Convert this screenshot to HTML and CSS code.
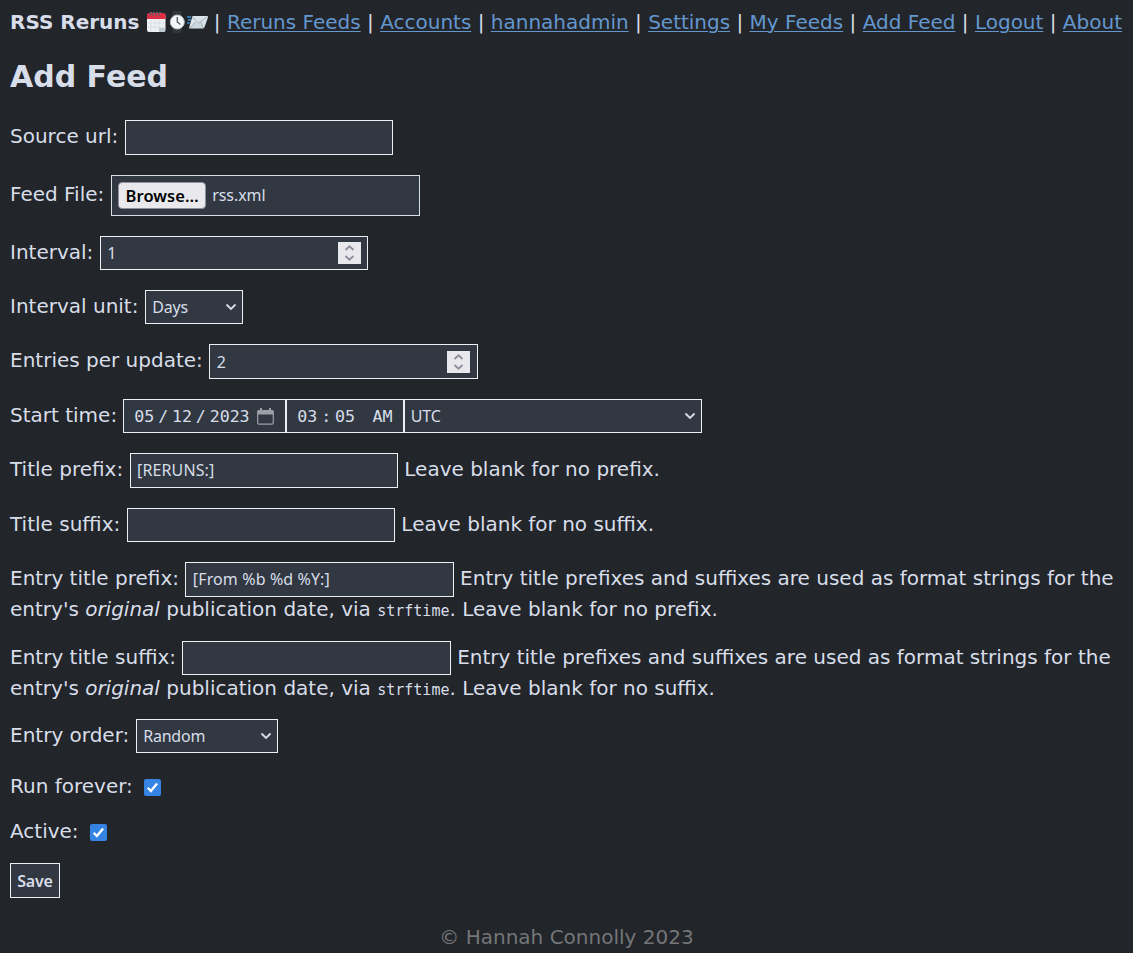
FILE: index.html
```html
<!DOCTYPE html>
<html lang="en">
<head>
<meta charset="utf-8">
<title>RSS Reruns - Add Feed</title>
<link rel="stylesheet" href="styles.css">
</head>
<body>
<nav class="nav"><strong>RSS Reruns</strong>
<span class="logo"><svg width="20" height="22" viewBox="0 0 20 22"><rect x="1" y="3" width="18.500" height="18" rx="2" fill="#edf1f4"/><path d="M1 8V4q0-2 2-2h14.500q2 0 2 2v4z" fill="#dd2e44"/><path d="M5 8v12M9 8v12M13 8v12M2 12h16M2 16h16" stroke="#ccd6dd" stroke-width=".6"/><path d="M13 21v-4h6v2l-2 2z" fill="#bdc9d0"/><path d="M4 5V2q1-2 2 0M7 5V2q1-2 2 0M10 5V2q1-2 2 0M13 5V2q1-2 2 0" stroke="#56616a" fill="none"/></svg><svg width="20" height="22" viewBox="0 0 20 22"><path d="M7 0h8l1 5H6zM6 17h10l-1 5H7z" fill="#31373d"/><circle cx="11.300" cy="11" r="7" fill="#f5f8fa" stroke="#bac4cb" stroke-width="1"/><path d="M11.300 6v5l3 2.500" fill="none" stroke="#55606a" stroke-width="1.400"/></svg><svg class="mail" width="22" height="22" viewBox="0 0 22 22"><path d="M5.500 5h14.500q1.500 0 1 1.300l-3.500 10q-.5 1.200-2 1.200H3q-1.300 0-.8-1.300z" fill="#dce3e8"/><path d="M2.500 17l6.500-5.500 2 1 2-1 4 5.500z" fill="#ccd6dd"/><path d="M5 5.500l6 6q.8.600 1.700 0l7.800-6M3 17l5.500-6M16.500 17l-3-6" fill="none" stroke="#99aab5" stroke-width=".9"/><path d="M0 6h4M1 9h3M0 12h2.500" stroke="#3b94d9" stroke-width="1.300"/></svg></span>
| <a href="#">Reruns Feeds</a> | <a href="#">Accounts</a> | <a href="#">hannahadmin</a> | <a href="#">Settings</a> | <a href="#">My Feeds</a> | <a href="#">Add Feed</a> | <a href="#">Logout</a> | <a href="#">About</a></nav>
<h1>Add Feed</h1>
<form>
<p>Source url: <input class="control text" type="text"></p>
<p>Feed File: <span class="control file"><button class="browse" type="button">Browse…</button><span class="filename">rss.xml</span></span></p>
<p>Interval: <span class="control text number"><span>1</span><span class="stepper"><svg width="23" height="22" viewBox="0 0 23 22"><path d="M7.500 8l4-3.700 4 3.700M7.500 14l4 3.700 4-3.700"/></svg></span></span></p>
<p>Interval unit: <span class="control select unit"><span>Days</span><svg width="12" height="8" viewBox="0 0 12 8"><path d="M1.500 1.500L6 6l4.500-4.500"/></svg></span></p>
<p>Entries per update: <span class="control text number"><span>2</span><span class="stepper"><svg width="23" height="22" viewBox="0 0 23 22"><path d="M7.500 8l4-3.700 4 3.700M7.500 14l4 3.700 4-3.700"/></svg></span></span></p>
<p>Start time: <span class="start"><span class="control date"><span>05</span><span class="sep">/</span><span>12</span><span class="sep">/</span><span>2023</span><svg class="calendar" width="17" height="17" viewBox="0 0 17 17"><path d="M2 2.500h13q1.300 0 1.300 1.300v11q0 1.300-1.300 1.300H2Q.7 16.100.7 14.800v-11Q.7 2.500 2 2.500z" fill="none" stroke="#9a9fa8" stroke-width="1.200"/><path d="M.7 2.500h15.600v4H.7zM3 0h2v3H3zM12 0h2v3h-2z" fill="#9a9fa8"/></svg></span><span class="control time"><span>03</span><span class="sep">:</span><span>05</span><span class="ampm">AM</span></span><span class="control select zone"><span>UTC</span><svg width="12" height="8" viewBox="0 0 12 8"><path d="M1.500 1.500L6 6l4.500-4.500"/></svg></span></span></p>
<p>Title prefix: <input class="control text" type="text" value="[RERUNS:]"> Leave blank for no prefix.</p>
<p>Title suffix: <input class="control text" type="text"> Leave blank for no suffix.</p>
<p>Entry title prefix: <input class="control text" type="text" value="[From %b %d %Y:]"> Entry title prefixes and suffixes are used as format strings for the entry's <em>original</em> publication date, via <code>strftime</code>. Leave blank for no prefix.</p>
<p>Entry title suffix: <input class="control text" type="text"> Entry title prefixes and suffixes are used as format strings for the entry's <em>original</em> publication date, via <code>strftime</code>. Leave blank for no suffix.</p>
<p>Entry order: <span class="control select order"><span>Random</span><svg width="12" height="8" viewBox="0 0 12 8"><path d="M1.500 1.500L6 6l4.500-4.500"/></svg></span></p>
<p class="check">Run forever: <span class="box"><svg width="17" height="17" viewBox="0 0 17 17"><path d="M3.700 8.700l3.200 3.300 6.200-7.500"/></svg></span></p>
<p class="check">Active: <span class="box"><svg width="17" height="17" viewBox="0 0 17 17"><path d="M3.700 8.700l3.200 3.300 6.200-7.500"/></svg></span></p>
<p><button class="control save" type="button">Save</button></p>
</form>
<footer>© Hannah Connolly 2023</footer>
</body>
</html>
```
FILE: styles.css
```css
* { box-sizing: border-box; }
html { background: #22252a; }
body { margin: 0; padding: 10px 10px 0; height: 953px; overflow: hidden; color: #d8dee9; font: 20px "DejaVu Sans", sans-serif; }
.nav { height: 24px; white-space: nowrap; }
.logo { display: inline-flex; vertical-align: -4px; margin-right: -0.400px; }
.mail { margin-left: 1px; margin-right: -1px; }
a { color: #6497ce; text-decoration-thickness: 1px; text-underline-offset: 2px; }
h1 { margin: 25px 0 25.150px; font-size: 30px; line-height: 36px; }
p { margin: 0 0 19.400px; }
.control { display: inline-flex; align-items: center; vertical-align: middle; height: 34.450px; margin: 0 0 0.600px; padding: 0 6.500px; border: 1px solid #eceff4; border-radius: 0; background: #313842; color: #d8dee9; font: 16px "Noto Sans", sans-serif; letter-spacing: -0.200px; }
.text { width: 268.400px; }
input.text { letter-spacing: 0.120px; }
.file { width: 309px; height: 41px; border-color: #d8dee9; }
.browse { height: 27px; width: 88px; padding: 0; border: 1px solid #8f8f9d; border-radius: 4px; background: #e9e9ed; color: #000; font: 600 16.500px "Noto Sans", sans-serif; letter-spacing: 0.050px; }
.filename { margin-left: 6px; letter-spacing: -0.050px; }
.number, .select { justify-content: space-between; }
.select { padding-right: 5px; }
.stepper { display: flex; background: #e9e9ed; }
.stepper path { fill: none; stroke: #8f8f9d; stroke-width: 1.900; }
.select path { fill: none; stroke: #d8dee9; stroke-width: 1.800; }
.unit { width: 98px; }
.order { width: 142px; }
.start { display: inline-flex; vertical-align: middle; margin-left: -0.700px; }
.date, .time { font-family: "DejaVu Sans Mono", monospace; font-size: 16.670px; letter-spacing: -0.040px; padding-left: 10.500px; }
.date { width: 163px; }
.time { width: 118px; padding-left: 10.500px; }
.zone { width: 298px; padding-left: 6px; }
.sep { width: 17.700px; text-align: center; }
.calendar { margin-left: 7px; }
.ampm { margin-left: 17.500px; }
code { font: 15px "DejaVu Sans Mono", monospace; }
.check { height: 25px; line-height: 26px; margin-bottom: 20px; }
.box { display: inline-flex; margin-left: 5px; margin-bottom: 1px; vertical-align: middle; width: 17px; height: 17px; border-radius: 2px; background: #3584e4; }
.box path { fill: none; stroke: #fff; stroke-width: 2.300; }
.save { font-weight: 600; width: 50px; justify-content: center; }
footer { margin-top: 27px; text-align: center; color: #747678; }
```
